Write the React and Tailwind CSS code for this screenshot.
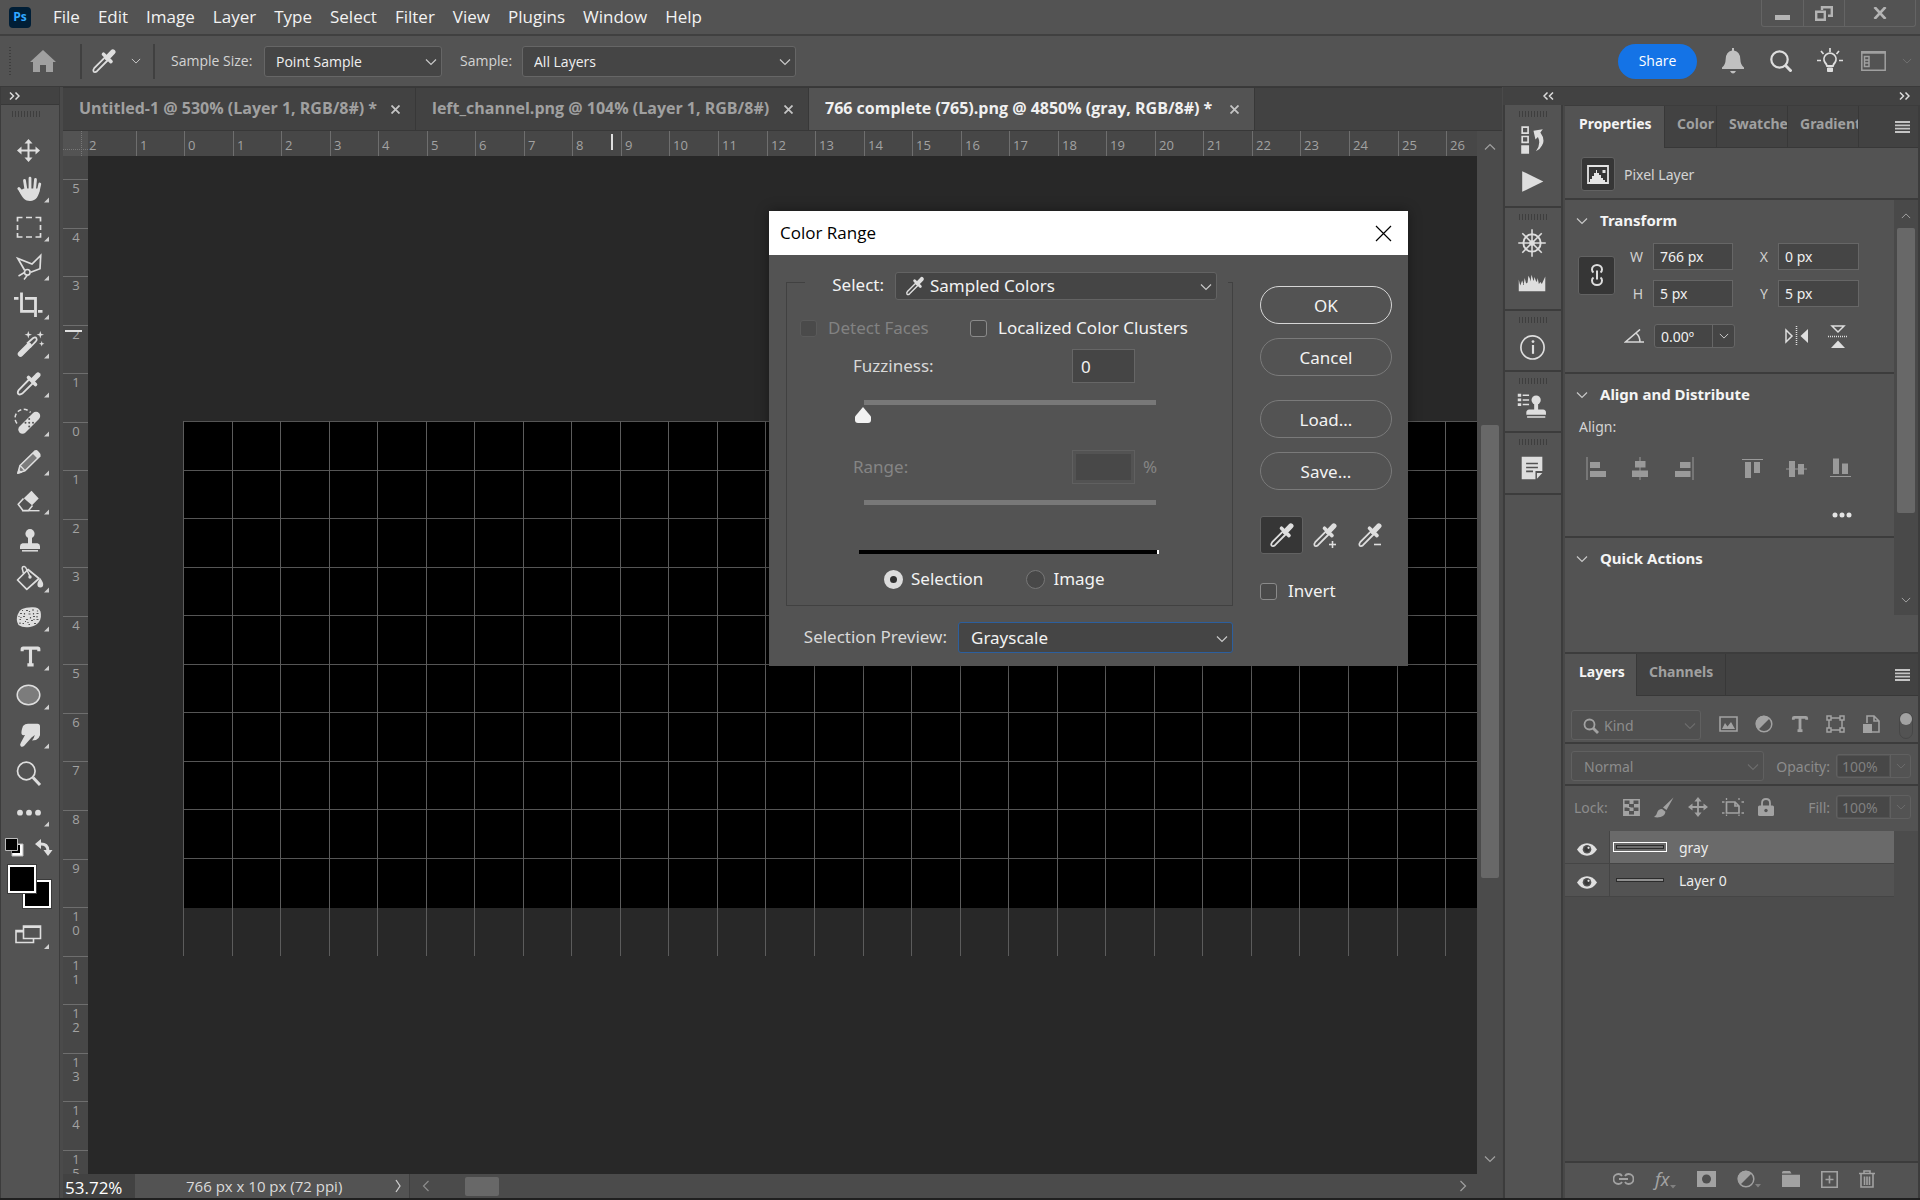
import { useState } from "react";
import clsx from "clsx";
import { Type } from "lucide-react";

const STEP = 48.54;

const menus = ['File', 'Edit', 'Image', 'Layer', 'Type', 'Select', 'Filter', 'View', 'Plugins', 'Window', 'Help'];

const files = [
  { name: 'Untitled-1 @ 530% (Layer 1, RGB/8#) *', size: 'w-[353px]' },
  { name: 'left_channel.png @ 104% (Layer 1, RGB/8#)', size: 'w-[393px]' },
  { name: '766 complete (765).png @ 4850% (gray, RGB/8#) *', size: 'w-[446px]' },
];

const Chevron = ({ className, flip }) => (
  <svg viewBox="0 0 12 8" className={clsx('w-3 h-2 fill-none stroke-current', className)} aria-hidden="true">
    <path d={flip ? 'M1 6.5 6 1.5 11 6.5' : 'M1 1.5 6 6.5 11 1.5'} strokeWidth="1.2" />
  </svg>
)

const DoubleArrow = ({ left }) => (
  <svg viewBox="0 0 11 8" className="w-[11px] h-2 fill-none stroke-[#dcdcdc]" aria-hidden="true">
    <path d={left ? 'M4.5.5 1 4l3.5 3.5M10 .5 6.5 4 10 7.5' : 'M1 .5 4.5 4 1 7.5M6.500.5 10 4 6.500 7.5'} strokeWidth="1.5" />
  </svg>
)

const Grip = () => (
  <div className="h-[6px] w-[29px] bg-[repeating-linear-gradient(90deg,#3e3e3e_0_1px,transparent_1px_3px)]" />
)

const Dropper = ({ className, sign }) => (
  <svg viewBox="0 0 26 26" className={clsx('fill-none stroke-[#dedede]', className)} aria-hidden="true">
    <path d="M15.200 8.200 3.200 20.200q-1.600 2-.6 3.400 1.400 1.200 3.400-.4L18 11" strokeWidth="1.8" />
    <path d="M12.500 6.200 20 13.600M15.500 10.500l4.500-4.500" strokeWidth="3.600" strokeLinecap="round" />
    <path d="M18 8 21.800 4" strokeWidth="5.400" strokeLinecap="round" />
    {sign && <path d="M17 22.500h7" strokeWidth="1.6" />}
    {sign === 'plus' && <path d="M20.500 19v7" strokeWidth="1.6" />}
  </svg>
)

const Drop = ({ id, value, className, selectClass, icon, label, disabled, arrow = 'right-[5px]' }) => (
  <div className={clsx('relative', className)}>
    <select id={id} aria-label={label} disabled={disabled} className={clsx('w-full h-full appearance-none outline-none rounded-[3px] border opacity-100', selectClass)}>
      <option>{value}</option>
    </select>
    {icon}
    <Chevron className={clsx('absolute top-1/2 -mt-[3px] pointer-events-none', disabled ? 'text-[#6c6c6c]' : 'text-[#c8c8c8]', arrow)} />
  </div>
)

/* one drawing per tool, each on a 58 x 39 button */
const tools = [
  { name: 'Move', art: <>
    <path d="M28.500 11v17M20 19.500h17" fill="none" strokeWidth="2" />
    <path stroke="none" d="m28.500 8 4 4.500h-8zM28.500 31l4-4.500h-8zM17 19.500l4.500-4v8zM40 19.500l-4.500-4v8z" /></> },
  { name: 'Hand', fly: true, art: <>
    <path d="M24.500 10.500 26 20M30 8.200V20M35.500 9.500 34.500 20M39.800 14 38 22M18.800 18.500 25 26" fill="none" strokeWidth="2.800" strokeLinecap="round" />
    <path stroke="none" d="M24 18.500h15.500c0 7-3.500 12.500-9.500 12.500-5 0-7.500-3-11-10z" /></> },
  { name: 'Rectangular Marquee', fly: true, art: <path d="M17.500 12.500V8.500h5M26 8.500h6M35.500 8.500h5v4M40.500 16v5M40.500 24v4h-5M32 28h-6M22.500 28h-5v-4M17.500 21v-5" fill="none" strokeWidth="1.700" /> },
  { name: 'Polygonal Lasso', fly: true, art: <>
    <path d="M24.500 22 17.800 10.500 32 16l8.700-8.500-.7 13.200-9.300 3.600" fill="none" strokeWidth="1.700" />
    <circle cx="27.300" cy="24.300" r="2.800" fill="none" strokeWidth="1.600" />
    <path d="M24.500 24.500 18.500 28M27.500 27l-3.500 4.500" fill="none" strokeWidth="1.500" /></> },
  { name: 'Crop', fly: true, art: <path d="M21.500 5.500v18.800H34M14 11.300h4.500M25 11.300h10.500V30M38 24.300h4.500" fill="none" strokeWidth="2.800" /> },
  { name: 'Magic Wand', fly: true, art: <>
    <path d="m20.500 28 8.500-8.500" fill="none" strokeWidth="5.500" strokeLinecap="round" />
    <path d="m27 17.500 6.200-5.500q2.200-1.400 3.200.2t-.6 3.200L30 21.500" fill="none" strokeWidth="1.700" />
    <path stroke="none" d="m28.300 5 .9 2.800 2.800.9-2.800.9-.9 2.800-.9-2.800-2.800-.9 2.800-.9zM40.300 5l.9 2.800 2.800.9-2.800.9-.9 2.800-.9-2.800-2.800-.9 2.800-.9zM41.700 15l.7 2 2 .7-2 .7-.7 2-.7-2-2-.7 2-.7z" /></> },
  { name: 'Eyedropper', fly: true, art: <>
    <path d="M29.500 14 18.700 25q-1.600 2.400-.4 4 1.600 1.200 4-.4L33 18" fill="none" strokeWidth="1.800" />
    <path d="m28.500 12.500 7 7" fill="none" strokeWidth="3.600" strokeLinecap="round" />
    <path d="m33 15 5-5" fill="none" strokeWidth="5.200" strokeLinecap="round" /></> },
  { name: 'Spot Healing Brush', fly: true, art: <>
    <path d="M22.500 25.500 36 12" fill="none" strokeWidth="8.400" strokeLinecap="round" />
    <path d="M17 19.500A8.400 8.400 0 0 1 30.500 8.500" fill="none" strokeWidth="1.500" strokeDasharray="4 2.500" />
    <g stroke="none" fill="#535353"><circle cx="25.500" cy="18.800" r="1" /><circle cx="29.200" cy="15" r="1" /><circle cx="29.200" cy="18.800" r="1" /><circle cx="29.200" cy="22.500" r="1" /><circle cx="33" cy="18.800" r="1" /></g></> },
  { name: 'Pencil', fly: true, art: <>
    <path d="m18 30 2-7.500L35 8l5 5-15 14.800z" fill="#7c7c7c" strokeWidth="1.600" strokeLinejoin="round" />
    <path stroke="none" d="m32.500 10.500 2.500-3q1.500-1 3 .5l2 2.200q1.200 1.400 0 2.600l-2.500 2.700zM17 31l1.500-5 3.800 3.800z" />
    <path d="m20 22.500 2.200 2.300 2.800 3" fill="none" strokeWidth="1.300" /></> },
  { name: 'Eraser', fly: true, art: <>
    <path stroke="none" d="m31.500 8.800 7.200 7.600-6.700 6.900-8.200-7z" />
    <path d="m23.500 16.500-5.300 5.800 4.700 6.200h5.600l4-5" fill="none" strokeWidth="1.600" strokeLinejoin="round" />
    <path d="M22 28.700h17.500" strokeWidth="1.400" /></> },
  { name: 'Clone Stamp', art: <>
    <circle cx="30" cy="12.700" r="4.600" stroke="none" />
    <path stroke="none" d="M28 16h4v6.200h5.500q2.500.3 2.500 3V28H20v-2.800q0-2.700 2.500-3H28z" />
    <path d="M22 29.800h16" strokeWidth="1.500" /></> },
  { name: 'Paint Bucket', fly: true, art: <>
    <path d="m17.500 20 10.500-10.500 11 9-12.200 10.800z" fill="none" strokeWidth="1.700" strokeLinejoin="round" />
    <path d="M23.500 13.500 22.200 8.500q0-2.200 2-2 1.500.3 2.300 2.500l3.500 7.500" fill="none" strokeWidth="1.500" />
    <circle cx="30" cy="17" r="1.700" stroke="none" />
    <path stroke="none" d="M40.200 18c2 3 3 4.500 3 6.500a2.900 2.900 0 0 1-5.800 0c0-2 1-3.500 2.800-6.500z" /></> },
  { name: 'Sponge', fly: true, art: <>
    <path stroke="none" d="M22 10q4-2 11-1.800 6 0 7.500 4.300 1.500 6-1.500 10.500Q36 27 30 28q-7 1.200-11.500-2-3-5-.8-10.500Q19 11.500 22 10z" />
    <path d="M20 14.500h2M26 11.500h2M32 11h2M36.500 14.500h2M23 17.500h2M28.500 15h2M33 17.500h2M19.500 20.500H21M26 20.500h2M31 21.500h2M36.500 20.500h2M22.500 24.500H24M28.500 25.500H30M34 24.500h2M24.500 14v1.500M30.500 18v1.500M20 23.500V25M37 17v1.500M28 23v1M33.500 14v1.500M22 11.500h1M29.500 12v1M37.500 11.500v1M18.500 17.500h1M21 18v1M25 22.500h1M34 20v1" fill="none" stroke="#555" strokeWidth="1.200" /></> },
  { name: 'Horizontal Type', fly: true, art: <Type x="18" y="5.500" width="25" height="26" className="stroke-[#dedede]" strokeWidth="3" strokeLinecap="butt" /> },
  { name: 'Ellipse', fly: true, art: <ellipse cx="28.500" cy="18" rx="11.300" ry="9.800" fill="#7c7c7c" strokeWidth="1.500" /> },
  { name: 'Smudge', fly: true, art: <path stroke="none" d="M23 10q2-2.300 5-2.300h9.500q2.500 0 2.500 2.500v9q-.5 2.500-4 4.800l-4 .5q2-2 2.800-5.500l-3.300 2.500-7.500 8.500q-1.800 1.500-3.300.3-1.200-1.500 0-3.300l4.300-8q-2.500.5-3.300-.8-1-2 1.300-8.200z" /> },
  { name: 'Zoom', art: <>
    <circle cx="26.300" cy="16" r="8.800" fill="none" strokeWidth="1.700" />
    <path d="m33 22.500 7 7.500" strokeWidth="3" /></> },
  { name: 'Edit Toolbar', fly: true, art: <g stroke="none"><circle cx="20" cy="18.700" r="2.900" /><circle cx="29" cy="18.700" r="2.900" /><circle cx="38" cy="18.700" r="2.900" /></g> },
];

const ToolButton = ({ name, art, fly }) => (
  <button aria-label={name} className="block w-full">
    <svg viewBox="1 0 58 39" className="w-full h-[39px] fill-[#dedede] stroke-[#dedede]">
      {art}
      {fly && <path stroke="none" fill="#cfcfcf" d="M49 27.500v5h-5z" />}
    </svg>
  </button>
)

const Toolbar = () => (
  <aside className="w-[60px] shrink-0 flex flex-col border-x border-[#3c3c3c] bg-[#535353]">
    <div className="h-[18px] bg-[#424242] border-b border-[#383838] flex items-center px-2 shrink-0"><DoubleArrow /></div>
    <div className="pt-[6px] pl-[11px] h-[26px] shrink-0"><Grip /></div>
    {tools.map(t => <ToolButton key={t.name} {...t} />)}
    <div className="flex items-center justify-between pl-1 pr-[6px] h-7 shrink-0">
      <button aria-label="Default colors">
        <svg viewBox="0 0 19 19" className="w-[19px] h-[19px]">
          <path d="M7 6h11v12H7z" fill="#fff" stroke="#bbb" />
          <path d="M7 7h8v8H7z" fill="#000" />
          <path d="M.5.5h12v12H.5z" fill="#000" stroke="#bbb" />
        </svg>
      </button>
      <button aria-label="Swap colors">
        <svg viewBox="0 0 18 17" className="w-[18px] h-[17px]">
          <path d="M5 5q8-.5 8 7" fill="none" stroke="#dedede" strokeWidth="3" />
          <path d="M0 5 6 0v10zM8.500 11h9L13 17z" fill="#dedede" />
        </svg>
      </button>
    </div>
    <div className="relative h-[57px] shrink-0">
      <button aria-label="Background color" className="absolute left-[22px] top-[19px] size-7 bg-black border-2 border-white outline outline-[#3a3a3a]" />
      <button aria-label="Foreground color" className="absolute left-[7px] top-[4px] size-7 bg-black border-2 border-white outline outline-[#3a3a3a]" />
    </div>
    <button aria-label="Screen mode">
      <svg viewBox="1 0 58 39" className="w-full h-[39px] fill-none stroke-[#dedede]">
        <path d="M23 12.500h-7v12h17.500v-4" strokeWidth="1.600" />
        <path d="M23.500 8h17v12.500h-17zM23 8.500h18" strokeWidth="1.600" />
        <path d="M23 9h18M16 13.500h7" strokeWidth="2" />
        <path stroke="none" fill="#cfcfcf" d="M49 26v5h-5z" />
      </svg>
    </button>
  </aside>
)

const RulerTop = () => (
  <svg className="flex-1 h-[25px] min-w-0 bg-[#474747] font-['Open_Sans',sans-serif] text-[13px]" fill="#a2a2a2">
    <text x="1" y="19">2</text>
    {Array.from({ length: 28 }, (_, i) => {
      const x = Math.round(47.500 + i * STEP);
      return (
        <g key={i}>
          <path d={`M${x + .5} 0v25`} stroke="#6e6e6e" />
          <text x={x + 4} y="19">{Math.abs(i - 1)}</text>
        </g>
      )
    })}
    <path d="M524 3v16" stroke="#dedede" strokeWidth="2" />
  </svg>
)

const RulerLeft = () => (
  <svg className="w-[25px] h-full shrink-0 bg-[#474747] font-['Open_Sans',sans-serif] text-[13px]" fill="#a2a2a2" textAnchor="middle">
    {Array.from({ length: 21 }, (_, i) => {
      const y = Math.round(23 + i * STEP);
      return (
        <g key={i}>
          <path d={`M0 ${y + .5}h25`} stroke="#6e6e6e" />
          <text y={y + 14}>
            {String(Math.abs(i - 5)).split('').map((c, k) => <tspan key={k} x="13" dy={k * 14}>{c}</tspan>)}
          </text>
        </g>
      )
    })}
    <path d="M2 175h17" stroke="#dedede" strokeWidth="2" />
  </svg>
)

const Artboard = () => (
  <svg className="flex-1 min-w-0 h-full bg-[#282828]" aria-label="Canvas">
    <rect x="96" y="265" width="4000" height="487" fill="#000" />
    {Array.from({ length: 10 }, (_, i) => <path key={i} d={`M96 ${Math.round(265 + i * STEP) + .5}h4000`} stroke="#555" />)}
    {Array.from({ length: 60 }, (_, i) => <path key={i} d={`M${Math.round(95 + i * STEP) + .5} 265v535`} stroke="#5c5c5c" />)}
  </svg>
)

const Documents = () => {
  const [active, setActive] = useState(2);
  return (
    <main className="flex-1 min-w-0 flex flex-col ml-[3px] bg-[#424242]">
      <div className="flex h-[44px] shrink-0 border-y border-[#383838] text-[16px] overflow-hidden">
        {files.map((f, i) => (
          <div key={f.name} className={clsx('flex items-center border-r border-[#383838] pl-4 pr-[15px] gap-[11px] shrink-0', f.size, i === active ? 'bg-[#535353] text-[#f0f0f0]' : 'text-[#a0a0a0]')}>
            <button onClick={() => setActive(i)} className="flex-1 pb-[2px] text-left whitespace-nowrap font-bold">{f.name}</button>
            <button aria-label="Close tab">
              <svg viewBox="0 0 9 9" className="size-[9px] stroke-[#c4c4c4]"><path d="m.5.5 8 8M8.500.5l-8 8" strokeWidth="1.800" /></svg>
            </button>
          </div>
        ))}
      </div>
      <div className="flex-1 min-h-0 flex">
        <div className="flex-1 min-w-0 flex flex-col">
          <div className="flex shrink-0">
            <svg className="w-[25px] h-[25px] shrink-0 bg-[#535353]" stroke="#777" strokeDasharray="1 1"><path d="M18.500 0v25M0 18.500h25" /></svg>
            <RulerTop />
          </div>
          <div className="flex-1 min-h-0 flex"><RulerLeft /><Artboard /></div>
        </div>
        <div className="w-[25px] shrink-0 bg-[#4b4b4b] flex flex-col items-center pt-3 pb-[11px] text-[#a0a0a0]">
          <Chevron flip />
          <div className="grow-[274]" />
          <div className="grow-[453] w-[18px] rounded-[2px] bg-[#686868]" />
          <div className="grow-[277]" />
          <Chevron />
        </div>
      </div>
      <div className="h-[24px] shrink-0 flex items-center bg-[#4b4b4b] text-[#dadada]">
        <input aria-label="Zoom" defaultValue="53.72%" className="w-[72px] h-full bg-[#424242] text-[17px] text-white outline-none pl-[2px] pt-[2px]" />
        <div className="w-[275px] h-full bg-[#535353] flex items-center justify-between pl-[51px] pr-2 border-r border-[#404040]">
          <span className="text-[15px] whitespace-nowrap">766 px x 10 px (72 ppi)</span>
          <svg viewBox="0 0 6 14" className="w-[6px] h-[14px] fill-none stroke-[#ccc]"><path d="m1 1 4 6-4 6" strokeWidth="1.300" /></svg>
        </div>
        <div className="flex-1 flex items-center pl-[10px] pr-[33px]">
          <Chevron className="rotate-90 text-[#8c8c8c]" />
          <div className="w-[34px] h-[19px] ml-[33px] rounded-[2px] bg-[#686868]" />
          <Chevron className="-rotate-90 ml-auto text-[#a0a0a0]" />
        </div>
      </div>
    </main>
  )
}

const StripButton = ({ name, children }) => (
  <button aria-label={name} className="block w-full">
    <svg viewBox="0 0 57 42" className="w-full h-[42px] fill-[#dedede] stroke-[#dedede]">{children}</svg>
  </button>
)

const PanelStrip = () => (
  <nav className="w-[60px] shrink-0 border-x-2 border-[#3c3c3c] bg-[#535353] flex flex-col">
    <div className="h-[103px] border-b-2 border-[#3c3c3c] flex flex-col items-center pt-[6px]">
      <Grip />
      <StripButton name="History">
        <path d="M17.500 10h6v6h-6zM17.500 19.500h6v6h-6z" fill="none" strokeWidth="1.700" />
        <path stroke="none" d="M16.500 28.500h8V37h-8zM29 13.500l9.500-1.500-2.500 3.500q5.500 7.500 1.500 13.500-2 4-6 5.500 5.500-7.500 2-14.500l-2.500 2.500z" />
      </StripButton>
      <StripButton name="Actions"><path stroke="none" d="M17.500 12 39 22.500 17.500 33z" /></StripButton>
    </div>
    <div className="h-[103px] border-b-2 border-[#3c3c3c] flex flex-col items-center pt-[6px]">
      <Grip />
      <StripButton name="Navigator">
        <circle cx="27.500" cy="23" r="8.800" fill="none" strokeWidth="2" />
        <circle cx="27.500" cy="23" r="2.800" stroke="none" />
        <path d="M27.500 9v28M13.500 23h28M17.600 13.100l19.800 19.800M37.400 13.100 17.600 32.900" fill="none" strokeWidth="1.600" />
      </StripButton>
      <StripButton name="Histogram"><path stroke="none" d="M14 29.500v-12l1.500 6 2-5 1.500 4.500 1-7 1.500 5.500 1.500-1 .8-7 1.500 3 .7 3 1-7 1.500 5 .8 1.500.7-4 1.500 4 1 1 .7-4 1.300 6 1.500-2 1.500 2L41 14.500v15z" /></StripButton>
    </div>
    <div className="h-[61px] border-b-2 border-[#3c3c3c] flex flex-col items-center pt-[6px]">
      <Grip />
      <StripButton name="Info">
        <circle cx="28" cy="24.500" r="11.800" fill="none" strokeWidth="1.700" />
        <path d="M28.500 22v9" strokeWidth="2.200" /><circle cx="28.500" cy="18.500" r="1.400" stroke="none" />
      </StripButton>
    </div>
    <div className="h-[61px] border-b-2 border-[#3c3c3c] flex flex-col items-center pt-[6px]">
      <Grip />
      <StripButton name="Clone Source">
        <path d="M13 11h3.500M13 15.800h3.500M13 20.600h3.500" strokeWidth="3" />
        <path d="M18 11h6.500M18 15.800h6.500M18 20.600h6.500" strokeWidth="1.500" />
        <circle cx="31.700" cy="16" r="4.700" stroke="none" />
        <path stroke="none" d="M29.700 19h4v6.500h5q3 .3 3 3V31h-20v-2.500q0-2.700 3-3h5zM22.500 32.500h18.500V34H22.500z" />
      </StripButton>
    </div>
    <div className="h-[62px] border-b-2 border-[#3c3c3c] flex flex-col items-center pt-[6px]">
      <Grip />
      <StripButton name="Notes">
        <path stroke="none" d="M17 11.500h21V26h-7v8.500H17z" />
        <path stroke="none" d="M32.500 28H38l-5.500 6z" />
        <path d="M21.500 18.500h12M21.500 22.500h12M21.500 26.500h7" stroke="#535353" strokeWidth="1.600" />
      </StripButton>
    </div>
  </nav>
)

const PanelTabs = ({ tabs, sizes }) => (
  <div role="tablist" className="flex h-[42px] shrink-0 bg-[#424242] text-[14px] font-bold">
    {tabs.map((t, i) => (
      <button role="tab" key={t} aria-selected={i === 0} className={clsx('pb-[7px] text-left overflow-hidden whitespace-nowrap border-r border-[#383838]', sizes[i], i === 0 ? 'pl-[14px] bg-[#535353] text-[#f4f4f4]' : 'pl-3 border-b text-[#a0a0a0]')}>{t}</button>
    ))}
    <div className="flex-1 border-b border-[#383838] flex items-center justify-end pr-2">
      <button aria-label="Panel menu">
        <svg viewBox="0 0 15 12" className="w-[15px] h-3 stroke-[#c4c4c4]"><path d="M0 1h15M0 4.300h15M0 7.600h15M0 11h15" strokeWidth="1.800" /></svg>
      </button>
    </div>
  </div>
)

const Heading = ({ children }) => (
  <h2 className="flex items-center gap-3 h-[43px] pb-[2px] pl-[11px] text-[15px] font-bold text-[#f4f4f4]"><Chevron className="text-[#c8c8c8]" />{children}</h2>
)

const Field = ({ id, label, value }) => (
  <>
    <label htmlFor={id} className="text-right text-[#d0d0d0]">{label}</label>
    <input id={id} defaultValue={value} className="w-full h-[27px] bg-[#454545] border border-[#666] pl-[6px] text-[#f0f0f0] outline-none" />
  </>
)

const aligns = [
  ['Align left edges', 'M.5 0h1v23H.5zM4 5h10v6H4zM4 14h16v6H4z'],
  ['Align horizontal centers', 'M9.500 0h1v23h-1zM5 4h10.500v6.500H5zM2 13.500h16V20H2z'],
  ['Align right edges', 'M18.500 0h1v23h-1zM6 5h10.500v6H6zM1 14h15.500v6H1z'],
  ['Align top edges', 'M0 2h21v1H0zM3 5h6v16H3zM12 5h6v11h-6z'],
  ['Align vertical centers', 'M0 11.500h21v1H0zM3 4h6v16H3zM12 7h6v10.500h-6z'],
  ['Align bottom edges', 'M0 19h21v1H0zM3 1.500h6V17H3zM12 6.500h6V17h-6z'],
];

const Properties = () => (
  <section className="h-[546px] shrink-0 flex flex-col">
    <PanelTabs tabs={['Properties', 'Color', 'Swatches', 'Gradients']} sizes={['w-[100px]', 'w-[52px]', 'w-[71px]', 'w-[71px]']} />
    <div className="h-[52px] shrink-0 flex items-center gap-[9px] pl-4 pt-[2px] border-b-2 border-[#3c3c3c]">
      <div className="size-[34px] rounded-[3px] bg-[#363636] border border-[#626262] flex items-center justify-center">
        <svg viewBox="0 0 22 19" className="w-[22px] h-[19px]">
          <path d="M1 1h20v17H1z" fill="none" stroke="#e4e4e4" strokeWidth="1.800" />
          <path d="M3 17v-3h2v-3h2V8h2V5h1v3h2v2h2v3h2v2h2v2z" fill="#e4e4e4" /><path d="M15.500 5h3v3h-3z" fill="#e4e4e4" />
        </svg>
      </div>
      <span className="text-[14px] text-[#d4d4d4]">Pixel Layer</span>
    </div>
    <div className="flex-1 min-h-0 flex">
      <div className="flex-1 min-w-0">
        <div className="h-[174px] border-b-2 border-[#3c3c3c] text-[14px]">
          <Heading>Transform</Heading>
          <div className="flex items-center pl-[13px] gap-[14px]">
            <button aria-label="Link width and height" className="w-[37px] h-[39px] rounded-[3px] bg-[#363636] border border-[#626262] flex items-center justify-center">
              <svg viewBox="0 0 12 22" className="w-3 h-[22px] fill-none stroke-[#dedede]">
                <path d="M2.500 8.500Q1 7.500 1 5.500a5 4.500 0 0 1 10 0q0 2-1.500 3M2.500 13.500Q1 14.500 1 16.500a5 4.500 0 0 0 10 0q0-2-1.500-3M6 6.500v9" strokeWidth="2" />
              </svg>
            </button>
            <div className="grid grid-cols-[14px_80px_25px_81px] gap-x-[10px] gap-y-[10px] items-center">
              <Field id="w" label="W" value="766 px" />
              <Field id="x" label="X" value="0 px" />
              <Field id="h" label="H" value="5 px" />
              <Field id="y" label="Y" value="5 px" />
            </div>
          </div>
          <div className="flex items-center mt-[17px] pl-[59px]">
            <svg viewBox="0 0 20 14" className="w-5 h-[14px] fill-none stroke-[#d8d8d8]"><path d="M16 .5 1.500 13H20M12 4q4 3.500 4 9" strokeWidth="1.600" /></svg>
            <div className="flex ml-[10px] w-[81px] h-6 rounded-[3px] border border-[#666] bg-[#454545]">
              <input aria-label="Angle" defaultValue="0.00º" className="w-[57px] pl-[6px] bg-transparent text-[#f0f0f0] outline-none" />
              <button aria-label="Angle presets" className="flex-1 flex items-center justify-center border-l border-[#666] text-[#c8c8c8]"><Chevron className="w-[10px]" /></button>
            </div>
            <button aria-label="Flip horizontal" className="ml-[50px]">
              <svg viewBox="0 0 23 20" className="w-[23px] h-5"><path d="M1 4v12l6-6z" fill="none" stroke="#dedede" strokeWidth="1.500" /><path d="M23 3v14l-7.500-7z" fill="#dedede" /><path d="M11.500 0v20" stroke="#dedede" strokeDasharray="1 1" strokeWidth="1.500" /></svg>
            </button>
            <button aria-label="Flip vertical" className="ml-5">
              <svg viewBox="0 0 20 23" className="w-5 h-[23px]"><path d="M4 1h12l-6 6z" fill="none" stroke="#dedede" strokeWidth="1.500" /><path d="M3 23h14l-7-7.500z" fill="#dedede" /><path d="M0 11.500h20" stroke="#dedede" strokeDasharray="1 1" strokeWidth="1.500" /></svg>
            </button>
          </div>
        </div>
        <div className="h-[164px] border-b-2 border-[#3c3c3c]">
          <Heading>Align and Distribute</Heading>
          <p className="pl-[14px] text-[14px] leading-5 text-[#d4d4d4]">Align:</p>
          <div className="flex pl-[21px] mt-5">
            {aligns.map(([name, d], i) => (
              <button key={name} aria-label={name} className={clsx('w-[44px]', i === 3 && 'ml-6')}>
                <svg viewBox="0 0 21 23" className="w-[21px] h-[23px] fill-[#9a9a9a]"><path d={d} /></svg>
              </button>
            ))}
          </div>
          <button aria-label="More align options" className="block ml-auto mr-[42px] mt-8">
            <svg viewBox="0 0 20 6" className="w-5 h-[6px] fill-[#e4e4e4]"><circle cx="3" cy="3" r="2.500" /><circle cx="10" cy="3" r="2.500" /><circle cx="17" cy="3" r="2.500" /></svg>
          </button>
        </div>
        <Heading>Quick Actions</Heading>
      </div>
      <div className="w-6 h-[415px] shrink-0 bg-[#494949] flex flex-col items-center justify-between pt-3 pb-[11px] text-[#a0a0a0]">
        <Chevron flip className="w-[10px]" />
        <div className="w-[18px] h-[285px] rounded-[2px] bg-[#686868] mb-[75px]" />
        <Chevron className="w-[10px]" />
      </div>
    </div>
  </section>
)

const Percent = ({ id }) => (
  <div className="flex w-[75px] h-6 rounded-[3px] border border-[#606060] p-0">
    <input id={id} disabled defaultValue="100%" className="w-[51px] m-px pl-1 bg-[#474747] text-[#808080] outline-none" />
    <button aria-label="Show slider" disabled className="flex-1 flex items-center justify-center border-l border-[#606060] text-[#6c6c6c]"><Chevron className="w-[10px]" /></button>
  </div>
)

const Adjust = () => (
  <svg viewBox="0 0 18 18" className="size-[18px]"><circle cx="9" cy="9" r="7.800" fill="none" stroke="#a2a2a2" strokeWidth="1.500" /><path d="M14.500 3.500A7.800 7.800 0 1 0 3.500 14.500z" fill="#a2a2a2" /></svg>
)

const filterIcons = [
  ['Pixel layers', <svg viewBox="0 0 19 16" className="w-[19px] h-4"><path d="M1 1h17v14H1z" fill="none" stroke="#a2a2a2" strokeWidth="1.600" /><path d="m3 13 3-6 2.500 3.500L12 6l4 7z" fill="#a2a2a2" /></svg>],
  ['Adjustment layers', <Adjust />],
  ['Type layers', <Type className="size-[20px] text-[#a2a2a2]" strokeWidth={3.400} strokeLinecap="butt" />],
  ['Shape layers', <svg viewBox="0 0 19 18" className="w-[19px] h-[18px] fill-none stroke-[#a2a2a2]"><path d="M5 3h9M5 15h9M3 5v8M16 5v8M1 1h4v4H1zM14 1h4v4h-4zM1 13h4v4H1zM14 13h4v4h-4z" strokeWidth="1.500" /></svg>],
  ['Smart objects', <svg viewBox="0 0 18 18" className="size-[18px]"><path d="M5 8V1h7l5 5v11h-7M12 1v5h5" fill="none" stroke="#a2a2a2" strokeWidth="1.600" /><path d="M1 9h9v9H1z" fill="#a2a2a2" /></svg>],
];

const lockIcons = [
  ['Lock transparent pixels', <svg viewBox="0 0 17 17" className="size-[17px]"><path d="M.8.8h15.400v15.400H.8z" fill="none" stroke="#a2a2a2" strokeWidth="1.500" /><path d="M6.500 1h4v4h-4zM1 5h5v3.500H1zM11 5h5v3.500h-5zM6.500 8.500h4V12h-4zM1 12h5v4H1zM11 12h5v4h-5zM4.500 8h3v1h-3z" fill="#a2a2a2" /></svg>],
  ['Lock image pixels', <svg viewBox="0 0 20 21" className="w-5 h-[21px] fill-[#a2a2a2]"><path d="M19.500.5 12.500 13 9 10.500zM8 12l3.500 2.800q-.8 4.500-5 5.200-3.500.8-6.500 0 2.500-1.300 3-4Q4 12 8 12z" /></svg>],
  ['Lock position', <svg viewBox="0 0 20 20" className="size-5"><path d="M10 3v14M3 10h14" stroke="#a2a2a2" strokeWidth="1.800" /><path d="m10 0 3.600 4.500H6.400zM10 20l3.600-4.500H6.400zM0 10l4.500-3.600v7.200zM20 10l-4.500-3.600v7.200z" fill="#a2a2a2" /></svg>],
  ['Lock artboard nesting', <svg viewBox="0 0 22 18" className="w-[22px] h-[18px] fill-none stroke-[#a2a2a2]"><path d="M4.500 4h8.500l4 4v7H4.500zM13 4v4h4" strokeWidth="1.700" /><path d="M4.500 0v2M0 4h2.500M17 0v2M19.500 4H22M4.500 16.500v2M0 15h2.500M17 16.500v2M19.500 15H22" strokeWidth="1.300" /></svg>],
  ['Lock all', <svg viewBox="0 0 16 18" className="w-4 h-[18px]"><path d="M4 8V5q0-4 4-4t4 4v3" fill="none" stroke="#a2a2a2" strokeWidth="1.800" /><path d="M1.500 7.500h13q1.500 0 1.500 1.500v7.500q0 1.500-1.500 1.500h-13Q0 18 0 16.500V9q0-1.500 1.500-1.500z" fill="#a2a2a2" /><circle cx="8" cy="12.500" r="1.700" fill="#535353" /></svg>],
];

const layers = [
  { name: 'gray', selected: true },
  { name: 'Layer 0', selected: false },
];

const Layers = () => (
  <section className="flex-1 min-h-0 flex flex-col border-t-2 border-[#3c3c3c] bg-[#535353] text-[14px]">
    <PanelTabs tabs={['Layers', 'Channels']} sizes={['w-[72px]', 'w-[89px]']} />
    <div className="h-[48px] shrink-0 flex items-center pl-[6px] pr-[5px] pt-3 border-b-2 border-[#3c3c3c]">
      <Drop label="Filter type" value="Kind" disabled className="w-[130px] h-[30px]" selectClass="pl-[32px] border-[#606060] bg-[#505050] text-[#8c8c8c]" icon={
        <svg viewBox="0 0 16 16" className="absolute left-3 top-2 size-4 fill-none stroke-[#a2a2a2]"><circle cx="6.500" cy="6.500" r="5" strokeWidth="1.800" /><path d="m10 10 5 5" strokeWidth="2.800" /></svg>} />
      <div className="flex-1 flex items-center justify-between pl-[18px] pr-[19px] pb-[3px]">
        {filterIcons.map(([name, art]) => <button key={name} aria-label={name}>{art}</button>)}
      </div>
      <button aria-label="Toggle layer filtering" className="w-[14px] h-[27px] flex items-start rounded-full border border-[#474747]"><span className="block size-3 rounded-full bg-[#a2a2a2]" /></button>
    </div>
    <div className="h-[42px] shrink-0 flex items-center justify-between pl-[6px] pr-[7px] pt-1 border-b-2 border-[#3c3c3c]">
      <Drop label="Blend mode" value="Normal" disabled className="w-[193px] h-[30px]" selectClass="pl-3 border-[#606060] bg-[#505050] text-[#8c8c8c]" />
      <div className="flex items-center gap-[6px] text-[#8c8c8c]"><label htmlFor="opacity">Opacity:</label><Percent id="opacity" /></div>
    </div>
    <div className="h-[45px] shrink-0 flex items-center pl-[9px] pr-[7px] pb-[3px] text-[#8c8c8c]">
      <span className="w-[49px]">Lock:</span>
      <div className="flex items-center gap-[14px]">
        {lockIcons.map(([name, art]) => <button key={name} aria-label={name}>{art}</button>)}
      </div>
      <label htmlFor="fill" className="ml-auto mr-[6px]">Fill:</label><Percent id="fill" />
    </div>
    <div className="flex-1 min-h-0 bg-[#4c4c4c] pr-6">
      {layers.map(l => (
        <div key={l.name} className="h-[33px] flex bg-[#535353] border-b border-[#454545]">
          <button aria-label={`Hide ${l.name}`} className="w-[45px] flex items-center justify-center pt-1 border-r border-[#454545]">
            <svg viewBox="0 0 20 13" className="w-5 h-[13px]"><path d="M0 6.500Q4 .3 10 .3t10 6.200q-4 6.200-10 6.200T0 6.500z" fill="#e0e0e0" /><circle cx="10" cy="6.200" r="4.300" fill="#535353" /><circle cx="10" cy="6.200" r="2.700" fill="#3a3a3a" /><circle cx="11.500" cy="4.800" r="1.100" fill="#e0e0e0" /></svg>
          </button>
          <button className={clsx('flex-1 flex items-center gap-3 pl-[3px] text-[#ececec]', l.selected && 'bg-[#6a6a6a]')}>
            <span className={clsx('w-[54px] h-[10px] flex items-center justify-center', l.selected && 'border border-white')}>
              <svg viewBox="0 0 48 4" className="w-12 h-1"><path d="M0 0h48v4H0z" fill="#2c2c2c" /><path d="M1 1.500h46v1H1z" fill={l.selected ? '#b0b0b0' : '#f4f4f4'} /></svg>
            </span>
            {l.name}
          </button>
        </div>
      ))}
    </div>
    <div className="h-[37px] shrink-0 border-t-2 border-[#3c3c3c] flex items-center justify-between pl-12 pr-[43px] pb-[3px] text-[#a2a2a2]">
      <button aria-label="Link layers"><svg viewBox="0 0 21 12" className="w-[21px] h-3 fill-none stroke-current"><path d="M9 3Q8 1 5.500 1a5 5 0 0 0 0 10Q8 11 9 9M12 3q1-2 3.500-2a5 5 0 0 1 0 10Q13 11 12 9M6 6h9" strokeWidth="1.800" /></svg></button>
      <button aria-label="Layer style" className="flex items-end italic text-[18px] leading-5">fx<svg viewBox="0 0 6 4" className="w-[6px] h-1 fill-[#808080]"><path d="M0 0h6L3 3.500z" /></svg></button>
      <button aria-label="Add mask"><svg viewBox="0 0 19 16" className="w-[19px] h-4"><path d="M0 0h19v16H0z" fill="#a2a2a2" /><circle cx="9.500" cy="8" r="4.500" fill="#4e4e4e" /></svg></button>
      <button aria-label="New adjustment layer" className="flex items-end"><Adjust /><svg viewBox="0 0 6 4" className="w-[6px] h-1 fill-[#808080]"><path d="M0 0h6L3 3.500z" /></svg></button>
      <button aria-label="New group"><svg viewBox="0 0 18 16" className="w-[18px] h-4"><path d="M0 1.500Q0 0 1.500 0H8l1.500 2.500H0zM0 3.700h18V16H0z" fill="#a2a2a2" /></svg></button>
      <button aria-label="New layer"><svg viewBox="0 0 17 17" className="size-[17px] fill-none stroke-current"><path d="M.8.8h15.400v15.400H.8zM8.500 4.500v8M4.500 8.500h8" strokeWidth="1.600" /></svg></button>
      <button aria-label="Delete layer"><svg viewBox="0 0 16 18" className="w-4 h-[18px] fill-none stroke-current"><path d="M0 3.500h16M5 3V1h6v2M2 4v13h12V4M5.500 6.500V15M8 6.500V15M10.500 6.500V15" strokeWidth="1.600" /></svg></button>
    </div>
  </section>
)

const Check = ({ id, label, disabled, className }) => (
  <div className={clsx('flex items-center gap-[11px]', className)}>
    <input id={id} type="checkbox" disabled={disabled} className={clsx('appearance-none size-[17px] shrink-0 rounded-[3px] border bg-[#4a4a4a] checked:bg-[#1473e6]', disabled ? 'border-[#5a5a5a]' : 'border-[#8a8a8a]')} />
    <label htmlFor={id} className={disabled ? 'text-[#828282]' : ''}>{label}</label>
  </div>
)

const Radio = ({ id, label, ...rest }) => (
  <div className="flex items-center gap-2">
    <input id={id} type="radio" name="view" className="appearance-none size-[19px] rounded-full border border-[#777] bg-[#484848] checked:border-[6px] checked:border-[#dcdcdc] checked:bg-[#303030]" {...rest} />
    <label htmlFor={id}>{label}</label>
  </div>
)

const Slider = ({ label, disabled, value }) => (
  <div className="relative h-[23px]">
    <div className="h-[5px] bg-[#787878]" />
    {!disabled && (
      <input type="range" aria-label={label} min="0" max="200" defaultValue={value}
        className="absolute -left-[9px] top-[7px] w-[310px] h-4 appearance-none bg-transparent [&::-webkit-slider-thumb]:appearance-none [&::-webkit-slider-thumb]:w-4 [&::-webkit-slider-thumb]:h-4 [&::-webkit-slider-thumb]:rounded-b-[3px] [&::-webkit-slider-thumb]:bg-[#f2f2f2] [&::-webkit-slider-thumb]:[clip-path:polygon(50%_0,100%_60%,100%_100%,0_100%,0_60%)]" />
    )}
  </div>
)

const pill = 'h-[38px] rounded-full border text-center pt-[2px]';

const ColorRange = () => (
  <div role="dialog" aria-labelledby="dialog-title" className="absolute left-[769px] top-[211px] w-[639px] bg-[#535353] text-[#f2f2f2] font-['Noto_Sans',sans-serif] text-[17px] leading-6 shadow-[0_0_12px_rgba(0,0,0,.4)]">
    <header className="h-11 bg-white text-black flex items-center justify-between pl-[11px] pr-4 font-['Open_Sans',sans-serif]">
      <h1 id="dialog-title">Color Range</h1>
      <button aria-label="Close dialog"><svg viewBox="0 0 17 17" className="size-[17px] stroke-black"><path d="m1 1 15 15M16 1 1 16" strokeWidth="1.200" /></svg></button>
    </header>
    <div className="flex pl-[17px] pr-4 pt-4 pb-[13px]">
      <div className="w-[447px]">
        <fieldset className="border border-[#414141] h-[335px]">
          <legend className="ml-[18px] w-[423px] h-[22px]">
            <div className="flex items-center h-[30px]">
              <label htmlFor="range-select" className="w-[90px] pr-[11px] pb-[3px] text-right">Select:</label>
              <Drop id="range-select" value="Sampled Colors" className="w-[322px] h-7" selectClass="pl-[34px] border-[#636363] bg-[#454545]" icon={<Dropper className="absolute left-[10px] top-1 size-[20px] pointer-events-none" />} />
            </div>
          </legend>
          <div className="flex mt-[23px] pl-[13px] gap-[38px]">
            <Check id="faces" label="Detect Faces" disabled className="w-[132px] whitespace-nowrap" />
            <Check id="clusters" label="Localized Color Clusters" />
          </div>
          <div className="flex items-center pl-[66px] mt-[9px]">
            <label htmlFor="fuzziness" className="w-[219px] text-[#d8d8d8]">Fuzziness:</label>
            <input id="fuzziness" defaultValue="0" className="w-[63px] h-[34px] bg-[#454545] border border-[#666] pl-2 outline-none" />
          </div>
          <div className="w-[292px] ml-[77px] mt-[17px]"><Slider label="Fuzziness slider" value="0" /></div>
          <div className="flex items-center pl-[66px] mt-[27px] text-[#858585]">
            <label htmlFor="range" className="w-[219px]">Range:</label>
            <input id="range" disabled className="w-[63px] h-[34px] bg-[#484848] bg-clip-content p-[3px] border border-[#606060]" />
            <span className="ml-2">%</span>
          </div>
          <div className="w-[292px] ml-[77px] mt-4"><Slider disabled /></div>
          <div className="w-[300px] h-[4px] ml-[72px] mt-[27px] bg-black border-r-2 border-white" />
          <div className="flex items-center pl-[97px] mt-[13px] gap-[43px]">
            <Radio id="selection" label="Selection" defaultChecked />
            <Radio id="image" label="Image" />
          </div>
        </fieldset>
        <div className="flex items-center mt-4">
          <label htmlFor="preview" className="w-[172px] text-right whitespace-nowrap pr-[11px] pb-[2px] text-[#d8d8d8]">Selection Preview:</label>
          <Drop id="preview" value="Grayscale" className="w-[275px] h-[31px]" selectClass="pl-3 border-[#2c5f9e] bg-[#454545]" />
        </div>
      </div>
      <div className="flex-1 ml-[27px] pt-[15px] flex flex-col">
        <button className={clsx(pill, 'border-[#d6d6d6]')}>OK</button>
        <button className={clsx(pill, 'border-[#7a7a7a] mt-[14px]')}>Cancel</button>
        <button className={clsx(pill, 'border-[#7a7a7a] mt-6')}>Load...</button>
        <button className={clsx(pill, 'border-[#7a7a7a] mt-[14px]')}>Save...</button>
        <div className="flex items-center mt-[26px]">
          <button aria-label="Sample" className="w-[43px] h-[38px] rounded-[3px] bg-[#363636] border border-[#626262] flex items-center justify-center"><Dropper className="size-[26px]" /></button>
          <button aria-label="Add to sample" className="w-[45px] pl-[9px]"><Dropper sign="plus" className="size-[26px]" /></button>
          <button aria-label="Subtract from sample" className="w-[44px] pl-[9px]"><Dropper sign="minus" className="size-[26px]" /></button>
        </div>
        <Check id="invert" label="Invert" className="mt-[25px]" />
      </div>
    </div>
  </div>
)

const MenuBar = () => (
  <header className="h-9 shrink-0 border-b-2 border-[#404040] flex items-center pl-[9px]">
    <div className="w-[22px] h-[21px] rounded-[4px] bg-[#001e36] text-[#31a8ff] text-[12px] leading-[19px] font-bold text-center">Ps</div>
    <nav className="flex ml-[22px] gap-[18px] text-[17px] text-[#f2f2f2]">
      {menus.map(m => <button key={m}>{m}</button>)}
    </nav>
    <div className="ml-auto mr-1 self-start h-[27px] flex border border-t-0 border-[#646464] rounded-b-[3px]">
      <button aria-label="Minimize" className="w-[42px] border-r border-[#646464] flex justify-center pt-[15px]"><span className="block w-[15px] h-[5px] bg-[#b4b4b4]" /></button>
      <button aria-label="Restore" className="w-[41px] border-r border-[#646464] flex items-center justify-center">
        <svg viewBox="0 0 18 15" className="w-[18px] h-[15px] fill-none stroke-[#b4b4b4]"><path d="M1.200 5.700h8.600v8H1.200z" strokeWidth="2.400" /><path d="M7 4V1.200h9.800v8.600H13" strokeWidth="2.400" /></svg>
      </button>
      <button aria-label="Close" className="w-[70px] flex items-center justify-center">
        <svg viewBox="0 0 14 12" className="w-[14px] h-3 stroke-[#b4b4b4]"><path d="m1.500 0 11 12M12.500 0l-11 12" strokeWidth="2.600" /></svg>
      </button>
    </div>
  </header>
)

const OptionsBar = () => (
  <div className="h-[50px] shrink-0 flex items-center pl-[9px] pr-2 text-[14px]">
    <div className="w-[2px] h-[29px] bg-[repeating-linear-gradient(#3e3e3e_0_1px,transparent_1px_3px)]" />
    <button aria-label="Home" className="ml-[19px]">
      <svg viewBox="0 0 26 22" className="w-[26px] h-[22px] fill-[#a0a0a0]"><path d="M13 0 0 12h3v10h7v-7h6v7h7V12h3z" /></svg>
    </button>
    <div className="w-[2px] h-[35px] ml-[24px] bg-[#404040]" />
    <Dropper className="size-[26px] ml-[9px]" />
    <button aria-label="Tool presets" className="ml-[14px] text-[#c8c8c8]"><Chevron className="w-[10px]" /></button>
    <div className="w-[2px] h-[35px] ml-3 bg-[#404040]" />
    <label htmlFor="size" className="w-[109px] pl-4 pb-[2px] text-[#d4d4d4] whitespace-nowrap">Sample Size:</label>
    <Drop id="size" value="Point Sample" className="w-[178px] h-[31px]" selectClass="pl-[11px] border-[#666] bg-[#454545] text-[#f0f0f0]" />
    <label htmlFor="sample" className="w-[80px] pl-[18px] pb-[2px] text-[#d4d4d4]">Sample:</label>
    <Drop id="sample" value="All Layers" className="w-[274px] h-[31px]" selectClass="pl-[11px] border-[#666] bg-[#454545] text-[#f0f0f0]" />
    <button className="ml-auto w-[79px] h-[35px] rounded-full bg-[#1473e6] text-white text-[14px] pb-[2px]">Share</button>
    <button aria-label="Notifications" className="ml-[25px]">
      <svg viewBox="0 0 22 26" className="w-[22px] h-[26px] fill-[#c0c0c0]"><path d="M10 0h2v2.500q6 1 6.300 8.500.2 6 3.700 8.500V21H0v-1.500Q3.500 17 3.700 11 4 3.500 10 2.500zM8 23h6q-3 5-6 0z" /></svg>
    </button>
    <button aria-label="Search" className="ml-[26px]">
      <svg viewBox="0 0 22 22" className="size-[22px] fill-none stroke-[#dedede]"><circle cx="9.500" cy="9.500" r="8.200" strokeWidth="2.200" /><path d="m15.500 15.500 6 6" strokeWidth="3" /></svg>
    </button>
    <button aria-label="Discover" className="ml-[25px]">
      <svg viewBox="0 0 26 26" className="size-[26px] fill-none stroke-[#dedede]"><path d="M10 18q-.5-2-2-3.500A6 6 0 1 1 18 14.500Q16.500 16 16 18z" strokeWidth="1.800" /><path d="M10.500 20h5v3.500h-5z" fill="#dedede" /><path d="M13 0v4M4 3l2.500 3M22 3l-2.500 3M0 12.500h4M22 12.500h4" strokeWidth="1.700" /></svg>
    </button>
    <button aria-label="Workspace" className="ml-[18px]">
      <svg viewBox="0 0 25 20" className="w-[25px] h-5 fill-none stroke-[#a0a0a0]"><path d="M.8.8h23.400v18.400H.8zM0 2h25M3.500 5.500H8v10H3.500zM3.500 9H8M3.500 12H8" strokeWidth="1.500" /></svg>
    </button>
    <Chevron className="w-[10px] ml-4 text-[#707070]" />
  </div>
)

const App = () => {
  return (
    <div className="relative h-screen w-full flex flex-col overflow-hidden bg-[#535353] border-b-2 border-[#202020] font-['Open_Sans',sans-serif]">
      <MenuBar />
      <OptionsBar />
      <div className="flex-1 min-h-0 flex bg-[#4a4a4a] border-t border-[#3a3a3a]">
        <Toolbar />
        <Documents />
        <div className="w-[417px] shrink-0 flex flex-col ml-px font-['Noto_Sans',sans-serif]">
          <div className="h-[18px] shrink-0 flex items-center justify-between pl-10 pr-[10px] bg-[#424242]"><DoubleArrow left /><DoubleArrow /></div>
          <div className="flex-1 min-h-0 flex">
            <PanelStrip />
            <div className="flex-1 min-w-0 flex flex-col bg-[#535353] border-l-2 border-r-2 border-r-[#3c3c3c] border-l-[#484848] border-t border-t-[#3c3c3c]">
              <Properties />
              <Layers />
            </div>
          </div>
        </div>
      </div>
      <ColorRange />
    </div>
  )
}

export default App
